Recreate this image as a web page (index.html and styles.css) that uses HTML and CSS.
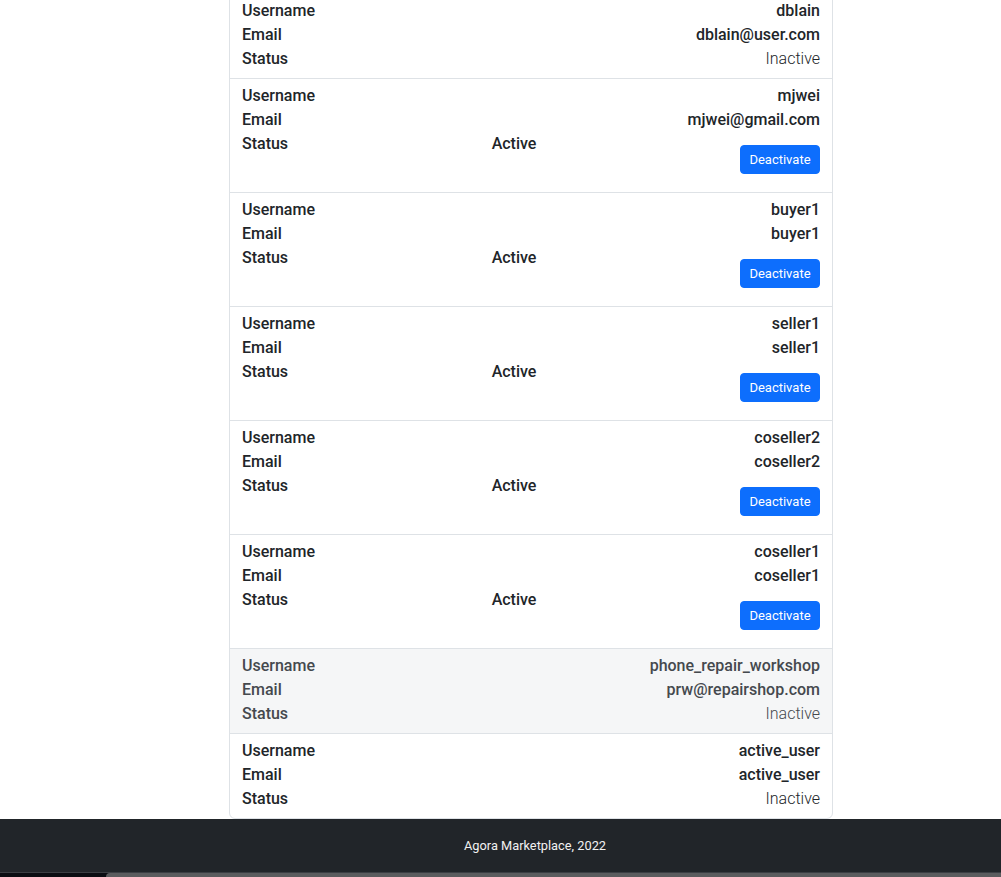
FILE: index.html
```html
<!DOCTYPE html>
<html lang="en">
<head>
<meta charset="utf-8">
<title>Users</title>
<link rel="stylesheet" href="styles.css">
</head>
<body>
<main class="page">
  <ul class="user-list">
    <li class="user">
      <div class="line"><span>Username</span><span>dblain</span></div>
      <div class="line"><span>Email</span><span>dblain@user.com</span></div>
      <div class="line"><span>Status</span><span class="inactive">Inactive</span></div>
    </li>
    <li class="user">
      <div class="line"><span>Username</span><span>mjwei</span></div>
      <div class="line"><span>Email</span><span>mjwei@gmail.com</span></div>
      <div class="line status"><span>Status</span><span>Active</span><form class="act"><button type="button" class="btn">Deactivate</button></form></div>
    </li>
    <li class="user">
      <div class="line"><span>Username</span><span>buyer1</span></div>
      <div class="line"><span>Email</span><span>buyer1</span></div>
      <div class="line status"><span>Status</span><span>Active</span><form class="act"><button type="button" class="btn">Deactivate</button></form></div>
    </li>
    <li class="user">
      <div class="line"><span>Username</span><span>seller1</span></div>
      <div class="line"><span>Email</span><span>seller1</span></div>
      <div class="line status"><span>Status</span><span>Active</span><form class="act"><button type="button" class="btn">Deactivate</button></form></div>
    </li>
    <li class="user">
      <div class="line"><span>Username</span><span>coseller2</span></div>
      <div class="line"><span>Email</span><span>coseller2</span></div>
      <div class="line status"><span>Status</span><span>Active</span><form class="act"><button type="button" class="btn">Deactivate</button></form></div>
    </li>
    <li class="user">
      <div class="line"><span>Username</span><span>coseller1</span></div>
      <div class="line"><span>Email</span><span>coseller1</span></div>
      <div class="line status"><span>Status</span><span>Active</span><form class="act"><button type="button" class="btn">Deactivate</button></form></div>
    </li>
    <li class="user muted">
      <div class="line"><span>Username</span><span>phone_repair_workshop</span></div>
      <div class="line"><span>Email</span><span>prw@repairshop.com</span></div>
      <div class="line"><span>Status</span><span class="inactive">Inactive</span></div>
    </li>
    <li class="user">
      <div class="line"><span>Username</span><span>active_user</span></div>
      <div class="line"><span>Email</span><span>active_user</span></div>
      <div class="line"><span>Status</span><span class="inactive">Inactive</span></div>
    </li>
  </ul>
</main>
<footer class="footer">
  <p class="footer-text">Agora Marketplace, 2022</p>
</footer>
<div class="dock-strip"><div class="dock"></div></div>
</body>
</html>
```

FILE: styles.css
```css
* { box-sizing: border-box; }

html, body {
  margin: 0;
  padding: 0;
  background: #fff;
  overflow: hidden;
}

body {
  font-family: Roboto, "Liberation Sans", sans-serif;
  font-size: 16px;
  line-height: 24px;
  color: #212529;
  width: 1001px;
  height: 877px;
}

.page {
  display: flow-root;
  padding-left: 229px;
  height: 819px;
}

.user-list {
  list-style: none;
  margin: -7px 0 0 0;
  padding: 0;
  width: 604px;
  border: 1px solid #dee2e6;
  border-radius: 6px;
  overflow: hidden;
}

.user {
  padding: 5px 12px 7px 12px;
  border-bottom: 1px solid #dee2e6;
  font-weight: 500;
}

.user:last-child { border-bottom: 0; }

.user.muted {
  background: #f5f6f7;
  color: #45494e;
}

.line {
  display: flex;
  justify-content: space-between;
  align-items: flex-start;
}

.inactive { font-weight: 300; }

.act { margin: 0; }

.btn {
  margin: 13px 0 11px 0;
  display: block;
  width: 80px;
  height: 29px;
  padding: 0;
  border: 1px solid #0d6efd;
  border-radius: 4px;
  background: #0d6efd;
  color: #fff;
  font-family: Roboto, "Liberation Sans", sans-serif;
  font-size: 13px;
  font-weight: 400;
  line-height: 27px;
  text-align: center;
}

.footer {
  height: 53px;
  background: #212529;
  display: flex;
  align-items: center;
  justify-content: center;
  padding-left: 69px;
}

.footer-text {
  margin: 0;
  color: #f1f1f1;
  font-size: 12.8px;
  line-height: 20px;
  font-weight: 400;
}

.dock-strip {
  height: 5px;
  border-top: 1px solid #3b3e43;
  background: #0b0d12;
  padding-left: 106px;
}

.dock {
  height: 4px;
  background: #5b5c5e;
  border-top-left-radius: 4px;
}
```
